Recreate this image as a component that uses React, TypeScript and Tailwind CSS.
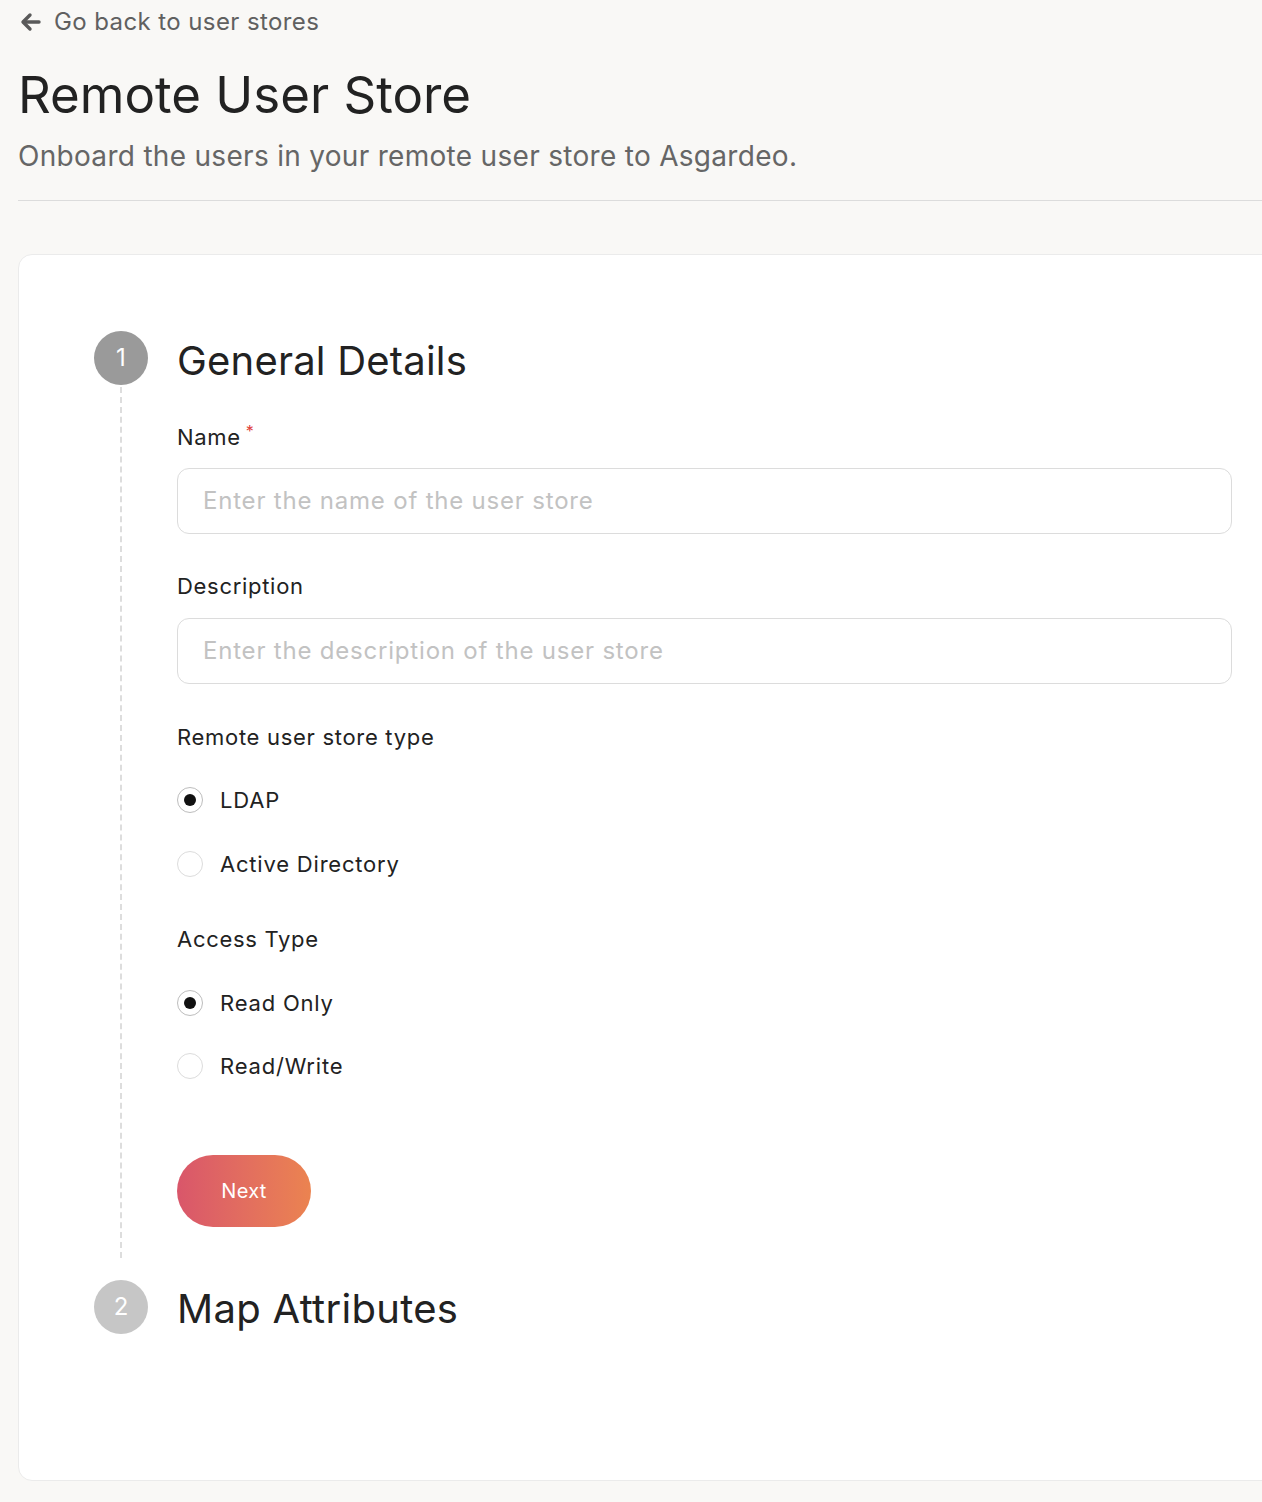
import React from "react";

function Radio({ checked, label }: { checked: boolean; label: string }) {
  return (
    <div className="flex items-center h-[28px]">
      <span
        className={
          checked
            ? "w-[26px] h-[26px] rounded-full border border-[#bdbdbd] bg-white flex items-center justify-center"
            : "w-[26px] h-[26px] rounded-full border border-[#dcdcdc] bg-white flex items-center justify-center"
        }
      >
        {checked && <span className="w-[12px] h-[12px] rounded-full bg-[#111]" />}
      </span>
      <span className="ml-[17px] text-[22px] text-[#222] leading-[28px] tracking-[0.8px]">{label}</span>
    </div>
  );
}

export default function App() {
  return (
    <div
      className="min-h-screen bg-[#f9f8f6] overflow-x-hidden pb-[21px]"
      style={{ fontFamily: "Inter, 'Noto Sans', sans-serif" }}
    >
      <div className="pl-[18px] w-[1308px]">
        <div className="pt-[7px] flex items-center text-[#5a5a5a]">
          <svg width="24" height="24" viewBox="0 0 24 24" fill="none" stroke="currentColor" strokeWidth="3.4" strokeLinecap="round" strokeLinejoin="round" className="ml-[1px]">
            <path d="M20 12H5" />
            <path d="M11 5l-7 7 7 7" />
          </svg>
          <span className="ml-[11px] text-[24px] leading-[30px] tracking-[0.4px] text-[#606060]">Go back to user stores</span>
        </div>
        <h1 className="mt-[29px] text-[51px] leading-[58px] text-[#222] font-normal tracking-[0px]">
          Remote User Store
        </h1>
        <p className="mt-[15px] text-[28px] leading-[34px] text-[#666] tracking-[0.3px]">
          Onboard the users in your remote user store to Asgardeo.
        </p>
        <div className="mt-[27px] border-b border-[#dcdcdc]" />
      </div>

      <div className="ml-[18px] mt-[53px] w-[1290px] bg-white border border-[#ebebeb] rounded-[14px] pt-[76px] px-[75px] pb-[141px]">
        <div className="flex">
          <div className="w-[54px] flex flex-col items-center shrink-0">
            <div className="w-[54px] h-[54px] rounded-full bg-[#9a9a9a] text-white text-[24px] flex items-center justify-center">
              1
            </div>
            <div className="flex-1 mt-[2px] mb-[17px] border-l-2 border-dashed border-[#dddddd]" />
          </div>
          <div className="ml-[29px] flex-1">
            <div className="h-[54px] flex items-center text-[40px] text-[#222] pt-[5px] tracking-[0.2px]">General Details</div>

            <div className="mt-[38px] text-[22px] leading-[28px] text-[#222] tracking-[0.7px]">
              Name<span className="text-[#e0413b] text-[16px] align-top ml-[5px] relative top-[-6px]">*</span>
            </div>
            <div className="mt-[17px] h-[66px] rounded-[12px] border border-[#dcdcdc] flex items-center px-[25px] text-[24px] text-[#c2c2c2] tracking-[0.8px]">
              Enter the name of the user store
            </div>

            <div className="mt-[38px] text-[22px] leading-[28px] text-[#222] tracking-[0.7px]">Description</div>
            <div className="mt-[18px] h-[66px] rounded-[12px] border border-[#dcdcdc] flex items-center px-[25px] text-[24px] text-[#c2c2c2] tracking-[0.8px]">
              Enter the description of the user store
            </div>

            <div className="mt-[39px] text-[22px] leading-[28px] text-[#222] tracking-[0.7px]">Remote user store type</div>
            <div className="mt-[35px] flex flex-col gap-[36px]">
              <Radio checked label="LDAP" />
              <Radio checked={false} label="Active Directory" />
            </div>

            <div className="mt-[47px] text-[22px] leading-[28px] text-[#222] tracking-[0.7px]">Access Type</div>
            <div className="mt-[36px] flex flex-col gap-[35px]">
              <Radio checked label="Read Only" />
              <Radio checked={false} label="Read/Write" />
            </div>

            <button className="mt-[75px] w-[134px] h-[72px] rounded-full bg-gradient-to-r from-[#d9566a] to-[#eb8350] text-white text-[20px] tracking-[0.3px]">
              Next
            </button>
            <div className="h-[48px]" />
          </div>
        </div>
        <div className="flex items-center">
          <div className="w-[54px] h-[54px] rounded-full bg-[#c6c6c6] text-white text-[24px] flex items-center justify-center shrink-0">
            2
          </div>
          <div className="ml-[29px] text-[40px] text-[#222] pt-[4px] tracking-[0.3px]">Map Attributes</div>
        </div>
      </div>
    </div>
  );
}
